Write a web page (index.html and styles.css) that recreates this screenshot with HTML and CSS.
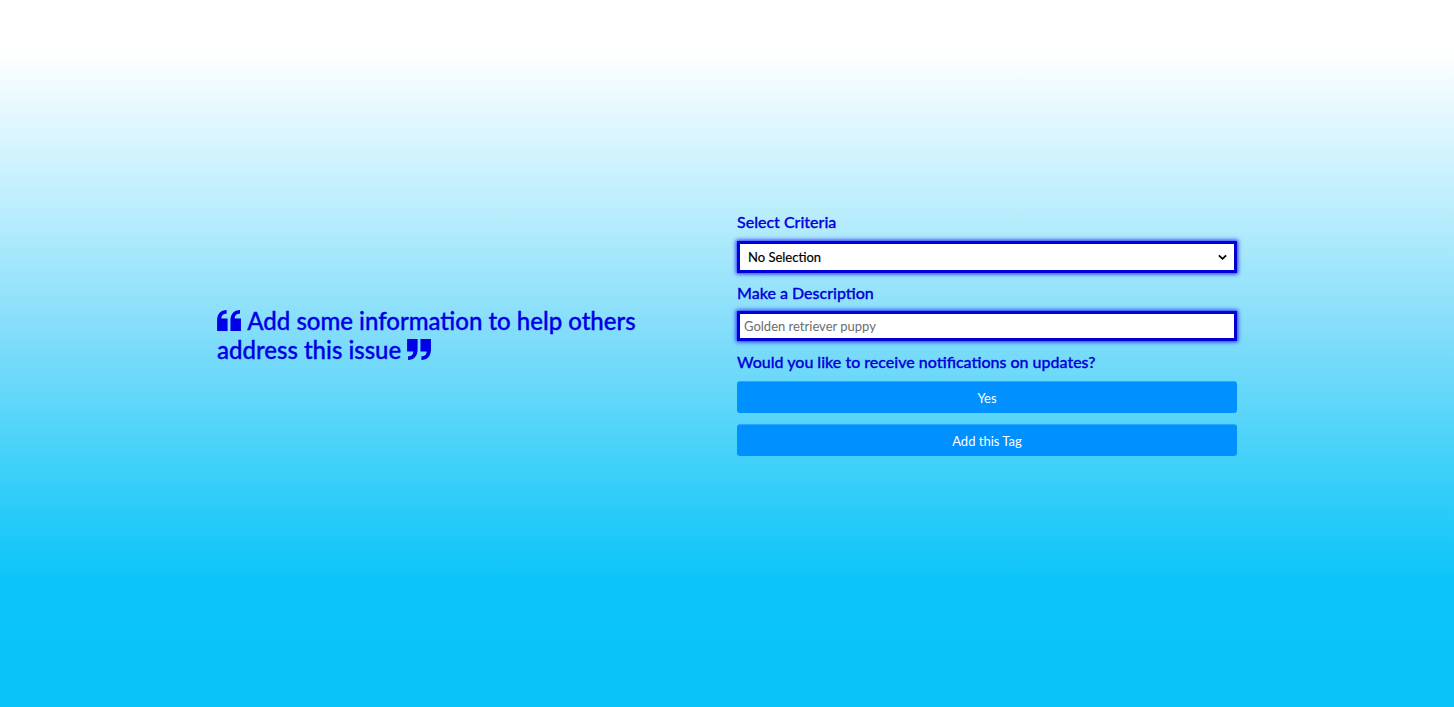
FILE: index.html
```html
<!DOCTYPE html>
<html lang="en">
<head>
<meta charset="utf-8">
<title>Add Tag</title>
<link rel="stylesheet" href="styles.css">
</head>
<body>
<main class="page">
  <section class="intro">
    <h2 class="intro-title">
      <svg class="quote" viewBox="0 0 26 22" aria-hidden="true"><path d="M0 11 C0 4 4 0 10 0 L10 4 C6 4 4.5 6 4.5 9 L11 9 L11 22 L0 22 Z M14 11 C14 4 18 0 24 0 L24 4 C20 4 18.5 6 18.5 9 L25 9 L25 22 L14 22 Z"/></svg>
      Add some information to help others address this issue
      <svg class="quote" viewBox="0 0 26 22" aria-hidden="true"><path d="M11 11 C11 18 7 22 1 22 L1 18 C5 18 6.5 16 6.5 13 L0 13 L0 0 L11 0 Z M25 11 C25 18 21 22 15 22 L15 18 C19 18 20.5 16 20.5 13 L14 13 L14 0 L25 0 Z"/></svg>
    </h2>
  </section>
  <form class="tag-form">
    <label class="field-label" for="criteria">Select Criteria</label>
    <div class="select-wrap">
      <select id="criteria" class="field-box select">
        <option>No Selection</option>
      </select>
      <svg class="chev" viewBox="0 0 10 7" aria-hidden="true"><path d="M1 1.2 L5 5 L9 1.2" fill="none" stroke="#000" stroke-width="2"/></svg>
    </div>
    <label class="field-label label-tight" for="desc">Make a Description</label>
    <input id="desc" class="field-box input" type="text" placeholder="Golden retriever puppy">
    <p class="field-label">Would you like to receive notifications on updates?</p>
    <button type="button" class="btn">Yes</button>
    <button type="button" class="btn">Add this Tag</button>
  </form>
</main>
</body>
</html>
```

FILE: styles.css
```css
html, body {
  margin: 0;
  padding: 0;
}
body {
  min-height: 707px;
  font-family: Lato, "Noto Sans", sans-serif;
  background: linear-gradient(to bottom, #ffffff 0px, #ffffff 50px, #b6ecfc 220px, #7fdcfa 340px, #3dd0f9 470px, #0cc4f8 580px, #08c3f8 707px);
}
.page {
  display: flex;
  justify-content: center;
  align-items: center;
  padding-top: 212px;
}
.intro {
  width: 520px;
  padding-bottom: 9px;
}
.intro-title {
  margin: 0;
  width: 440px;
  font-size: 24px;
  font-weight: 500;
  line-height: 29px;
  color: #0000e6;
  -webkit-text-stroke: 0.35px #0000e6;
}
.quote {
  width: 25px;
  height: 21px;
  fill: #0000e6;
  vertical-align: -1px;
}
.tag-form {
  width: 500px;
  display: flex;
  flex-direction: column;
}
.field-label {
  display: block;
  margin: 0 0 10px;
  font-size: 16px;
  line-height: 19px;
  font-weight: 500;
  color: #0000d8;
  -webkit-text-stroke: 0.3px #0000d8;
}
.label-tight {
  margin-bottom: 9px;
}
.select-wrap {
  position: relative;
  margin-bottom: 10px;
}
.field-box {
  box-sizing: border-box;
  width: 500px;
  border: 3px solid #0000d8;
  box-shadow: 0 0 4px 1px #2a2aff;
  background: #fff;
  font-family: Lato, "Noto Sans", sans-serif;
  font-size: 13px;
  color: #000;
  outline: none;
}
.select {
  display: block;
  height: 32px;
  padding: 0 8px;
  appearance: none;
  -webkit-appearance: none;
  border-radius: 0;
  -webkit-text-stroke: 0.2px #000;
}
.chev {
  position: absolute;
  right: 10px;
  top: 13px;
  width: 9px;
  height: 7px;
}
.input {
  height: 30px;
  padding: 0 4px;
  margin-bottom: 11px;
}
.input::placeholder {
  color: #6d6d6d;
}
.btn {
  box-sizing: border-box;
  width: 500px;
  height: 32px;
  margin-bottom: 11px;
  border: 0;
  border-top: 1px solid #2aa6ff;
  border-radius: 3px;
  background: #0090ff;
  color: #fff;
  font-family: Lato, "Noto Sans", sans-serif;
  font-size: 13px;
  cursor: pointer;
}
```
